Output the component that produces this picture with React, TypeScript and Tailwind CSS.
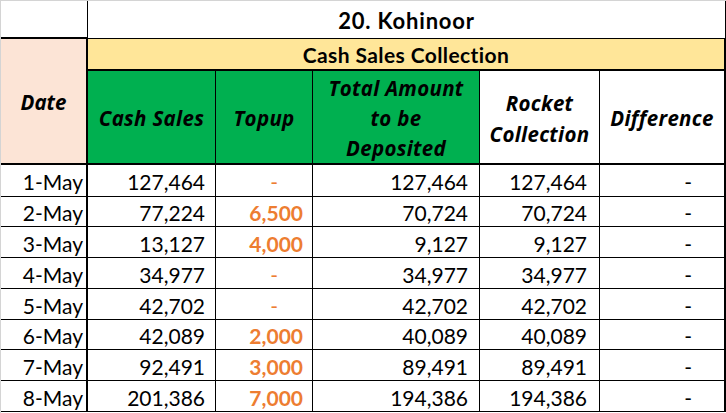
import React from "react";

const rows: string[][] = [
  ["1-May", "127,464", "-", "127,464", "127,464", "-"],
  ["2-May", "77,224", "6,500", "70,724", "70,724", "-"],
  ["3-May", "13,127", "4,000", "9,127", "9,127", "-"],
  ["4-May", "34,977", "-", "34,977", "34,977", "-"],
  ["5-May", "42,702", "-", "42,702", "42,702", "-"],
  ["6-May", "42,089", "2,000", "40,089", "40,089", "-"],
  ["7-May", "92,491", "3,000", "89,491", "89,491", "-"],
  ["8-May", "201,386", "7,000", "194,386", "194,386", "-"],
];

function DataRow({ r }: { r: string[] }) {
  const cell = "flex items-center justify-end border-b border-black leading-none pt-[2px]";
  const topupIsDash = r[2] === "-";
  return (
    <>
      <div className={`${cell} border-r-2 pr-[3px]`}>{r[0]}</div>
      <div className={`${cell} border-r pr-[10px]`}>{r[1]}</div>
      <div
        className={`${cell} border-r text-[#ed7d31] ${
          topupIsDash ? "pr-[34px]" : "pr-[9px] font-bold"
        }`}
      >
        {r[2]}
      </div>
      <div className={`${cell} border-r pr-[11px]`}>{r[3]}</div>
      <div className={`${cell} border-r pr-[12px]`}>{r[4]}</div>
      <div className={`${cell} border-r-2 pr-[32px]`}>{r[5]}</div>
    </>
  );
}

const head =
  "flex items-center justify-center border-b-2 border-black font-['Open_Sans',sans-serif] font-bold italic text-[20.5px] tracking-[0.3px] text-center";

export default function App() {
  return (
    <div className="w-[726px] h-[413px] overflow-hidden bg-white border-l border-t border-[#d4d4d4] font-['Lato',sans-serif] text-black text-[21px]">
      <div className="grid grid-cols-[87px_128px_97px_167px_120px_126px] grid-rows-[38px_32px_94px_32px_30px_31px_31px_31px_30px_31px_31px]">
        <div className="border-r border-b-2 border-black" />
        <div className="col-span-5 flex items-center justify-center border-r border-b border-black font-bold text-[22px] tracking-[0.8px] leading-none pt-[2px]">
          20. Kohinoor
        </div>
        <div className={`${head} row-span-2 bg-[#fce4d6] border-r-2 pt-[2px] tracking-normal`}>
          Date
        </div>
        <div className="col-span-5 flex items-center justify-center bg-[#ffe699] border-r-2 border-b-2 border-black font-bold text-[21px] tracking-[0.4px] leading-none pt-[1px]">
          Cash Sales Collection
        </div>
        <div className={`${head} bg-[#00b050] border-r pt-[3px]`}>Cash Sales</div>
        <div className={`${head} bg-[#00b050] border-r pt-[3px]`}>Topup</div>
        <div className={`${head} bg-[#00b050] border-r leading-[30px] pt-[2px]`}>
          <span>
            Total Amount
            <br />
            to be
            <br />
            Deposited
          </span>
        </div>
        <div className={`${head} border-r leading-[31px] pt-[4px]`}>
          <span>
            Rocket
            <br />
            Collection
          </span>
        </div>
        <div className={`${head} border-r-2 pt-[3px]`}>Difference</div>
        {rows.map((r) => (
          <DataRow key={r[0]} r={r} />
        ))}
      </div>
    </div>
  );
}
